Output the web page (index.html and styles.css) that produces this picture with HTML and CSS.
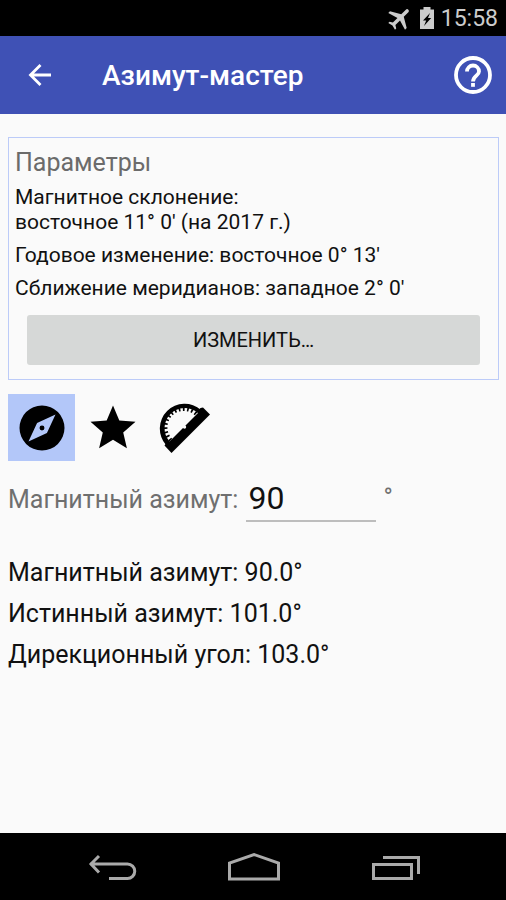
FILE: index.html
```html
<!DOCTYPE html>
<html lang="ru">
<head>
<meta charset="utf-8">
<meta name="viewport" content="width=device-width, initial-scale=1">
<title>Азимут-мастер</title>
<link rel="stylesheet" href="styles.css">
</head>
<body>
<div class="status">
  <svg width="26" height="26" viewBox="1 1 22 22" aria-hidden="true"><path transform="rotate(45 12 12)" d="M22 16v-2l-8.500-5V3.500a1.500 1.500 0 0 0-3 0V9L2 14v2l8.500-2.500V19L8 20.500V22l4-1 4 1v-1.500L13.500 19v-5.500z"/></svg>
  <svg width="16" height="24" viewBox="0 0 16 24" aria-hidden="true"><path fill-rule="evenodd" d="M4.500 1h7v2.500H15V23H1V3.500h3.500zM11 7L4 14.500h3.200L5 20l7.200-8H9z"/></svg>
  <time class="clock">15:58</time>
</div>
<header class="bar">
  <button class="bar-button" aria-label="Назад"><svg width="24" height="24" viewBox="0 0 24 24"><path d="M23 12H3M12.500 2L2.500 12l10 10" fill="none" stroke="currentColor" stroke-width="2.800"/></svg></button>
  <h1 class="title">Азимут-мастер</h1>
  <button class="bar-button" aria-label="Справка"><svg width="40" height="40" viewBox="0 0 40 40"><g fill="none" stroke="currentColor" stroke-width="3.800"><circle cx="20" cy="20" r="17"/><path d="M14 16.500a6 6 0 0 1 12 0c0 4-6 4.500-6 10"/></g><path d="M18.100 28h3.800v3.800h-3.800z" fill="currentColor"/></svg></button>
</header>
<main class="content">
  <section class="panel">
    <h2 class="panel-title">Параметры</h2>
    <p class="param">Магнитное склонение:<br>восточное 11° 0' (на 2017 г.)</p>
    <p class="param">Годовое изменение: восточное 0° 13'</p>
    <p class="param">Сближение меридианов: западное 2° 0'</p>
    <button class="change">ИЗМЕНИТЬ…</button>
  </section>
  <div class="modes">
    <button class="mode mode-active" aria-label="Магнитный азимут"><svg width="54" height="54" viewBox="0 0 24 24"><path fill-rule="evenodd" d="M12 2a10 10 0 1 0 0 20 10 10 0 0 0 0-20zM14.190 14.190L6 18l3.810-8.190L18 6zM12 10.900a1.100 1.100 0 1 0 0 2.200 1.100 1.100 0 0 0 0-2.200z"/></svg></button>
    <button class="mode" aria-label="Истинный азимут"><svg width="54" height="54" viewBox="0 0 24 24"><path d="M12 17.270L18.180 21l-1.640-7.030L22 9.240l-7.190-.61L12 2 9.190 8.630 2 9.240l5.460 4.730L5.820 21z"/></svg></button>
    <button class="mode" aria-label="Дирекционный угол"><svg width="54" height="54" viewBox="0 0 54 54"><path d="M9 44A24.800 24.800 0 0 1 44 9z"/><path d="M7.500 44.500L14.500 52 53 13.500 46 6.500 43.500 7 10 41z"/><path d="M12.500 40.500A20.200 20.200 0 0 1 41 12z" fill="#fafafa"/><path d="M13.800 39.200A18.300 18.300 0 0 1 39.700 13.300" fill="none" stroke="#000" stroke-width="4" stroke-dasharray="1.700 2.500"/><circle cx="27.500" cy="26" r="1.700" fill="#fafafa"/></svg></button>
  </div>
  <div class="entry">
    <label class="entry-label" for="azimuth">Магнитный азимут:</label>
    <input class="entry-input" id="azimuth" type="text" inputmode="numeric" value="90">
    <span class="degree">°</span>
  </div>
  <div class="results">
    <p>Магнитный азимут: 90.0°</p>
    <p>Истинный азимут: 101.0°</p>
    <p>Дирекционный угол: 103.0°</p>
  </div>
</main>
<nav class="system">
  <button class="key" aria-label="Назад"><svg width="50" height="32" viewBox="0 0 50 32"><path d="M3 12h37.500a7 7 0 0 1 0 14.500H22M12 4L4 12l8 8.500"/></svg></button>
  <button class="key" aria-label="Домой"><svg width="54" height="32" viewBox="0 0 54 32"><path d="M2.500 27V11L27 2.500 51.500 11v16z"/></svg></button>
  <button class="key" aria-label="Недавние"><svg width="50" height="32" viewBox="0 0 50 32"><path d="M2.500 12.500h38v14h-38zM12 5.500h35.500V22"/></svg></button>
</nav>
</body>
</html>
```
FILE: styles.css
```css
* { box-sizing: border-box; }
body {
  margin: 0;
  min-height: 100vh;
  display: flex;
  flex-direction: column;
  background: #fafafa;
  color: #111;
  font-family: Roboto, "Liberation Sans", sans-serif;
}
h1, h2, p { margin: 0; font-weight: 400; }
button {
  border: 0;
  padding: 0;
  background: none;
  color: inherit;
  font: inherit;
}
svg { display: block; }
.status {
  height: 36px;
  padding-right: 8px;
  display: flex;
  align-items: center;
  justify-content: flex-end;
  gap: 6px;
  background: #000;
  color: #ccc;
  fill: #ccc;
}
.clock { padding-top: 2px; font-size: 23px; line-height: 34px; }
.bar {
  height: 78px;
  padding: 0 13px 0 28px;
  display: flex;
  align-items: center;
  background: #3f51b5;
  color: #fff;
}
.title {
  flex: 1;
  margin-left: 50px;
  padding-top: 2px;
  font-size: 28px;
  line-height: 36px;
  font-weight: 500;
}
.content { flex: 1; padding: 23px 7px 0 8px; }
.panel {
  padding: 8px 6px 14px;
  border: 1px solid #bccbf8;
}
.panel-title { color: #6b6b6b; font-size: 25px; line-height: 34px; }
.param { margin-top: 8px; font-size: 21px; line-height: 25px; }
.panel-title + .param { margin-top: 5px; }
.change {
  display: block;
  width: calc(100% - 24px);
  height: 50px;
  margin: 14px 12px 0;
  border-radius: 3px;
  background: #d6d8d7;
  font-size: 20px;
}
.modes { display: flex; gap: 4px; margin-top: 14px; }
.mode {
  width: 67px;
  height: 67px;
  display: grid;
  place-items: center;
}
.mode-active { background: #b3c7f9; }
.entry { display: flex; align-items: center; margin-top: 16px; }
.entry-label { color: #6f6f6f; font-size: 25px; line-height: 44px; }
.entry-input {
  width: 130px;
  height: 45px;
  margin: 0 7px 0 8px;
  padding: 0 2px 2px;
  border: 0;
  border-bottom: 2px solid #bdbdbd;
  background: none;
  color: inherit;
  font: 32px Roboto, "Liberation Sans", sans-serif;
}
.degree { color: #6f6f6f; font-size: 25px; line-height: 40px; padding-bottom: 4px; }
.results { margin-top: 30px; font-size: 25px; line-height: 41px; }
.system {
  height: 67px;
  padding: 0 85px 0 87px;
  display: flex;
  align-items: center;
  justify-content: space-between;
  background: #000;
}
.key { padding-top: 2px; fill: none; stroke: #aaa; stroke-width: 3; }
```
